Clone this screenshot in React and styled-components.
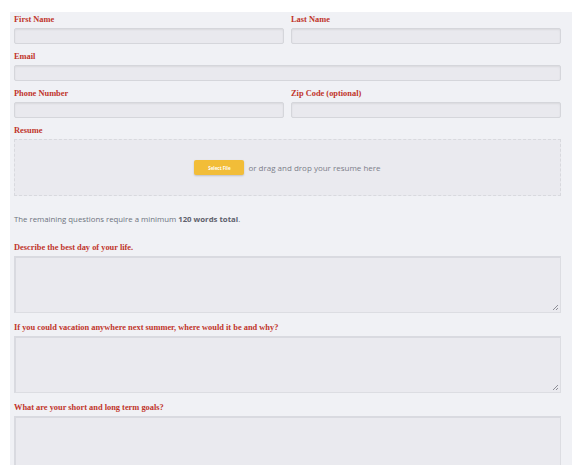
import styled, { createGlobalStyle } from "styled-components";

const GlobalStyle = createGlobalStyle`
  html, body {
    margin: 0;
    padding: 0;
    background: #ffffff;
  }
  * {
    box-sizing: border-box;
  }
`;

const Panel = styled.form`
  margin: 12px 0 0 10px;
  width: 562px;
  height: 453px;
  overflow: hidden;
  background: #f0f1f5;
  padding: 1px 11px 0 4px;
  display: flex;
  flex-direction: column;
`;

const Row = styled.div`
  display: grid;
  grid-template-columns: 1fr 1fr;
  column-gap: 7px;
  margin-bottom: ${(props) => props.$gap || 6}px;
`;

const Field = styled.div`
  display: flex;
  flex-direction: column;
  margin-bottom: ${(props) => props.$gap || 0}px;
`;

const Label = styled.label`
  font-family: "Liberation Serif", "DejaVu Serif", serif;
  font-weight: 700;
  font-size: 8.4px;
  line-height: 12px;
  padding-top: 1px;
  color: #c0352b;
  margin-bottom: 2px;
`;

const Input = styled.input`
  height: 16px;
  width: 100%;
  border: 1px solid #d5d6db;
  border-radius: 2px;
  background: #e9e9ee;
  box-shadow: inset 0 1px 2px rgba(0, 0, 0, 0.07);
  outline: none;
`;

const DropZone = styled.div`
  height: 57px;
  border: 1px dashed #d8d9de;
  background: #eaeaef;
  display: flex;
  align-items: center;
  justify-content: center;
  gap: 4px;
`;

const SelectButton = styled.button`
  width: 50px;
  height: 15px;
  padding: 0;
  border: none;
  border-radius: 2px;
  background: #f2bd38;
  box-shadow: 0 1px 2px rgba(0, 0, 0, 0.18);
  color: #ffffff;
  font-family: "Open Sans", sans-serif;
  font-size: 4.5px;
  font-weight: 700;
`;

const DropText = styled.span`
  font-family: "Open Sans", sans-serif;
  font-size: 8px;
  color: #7c7e8a;
`;

const Info = styled.p`
  margin: 17px 0 16px;
  font-family: "Open Sans", sans-serif;
  font-size: 7.8px;
  line-height: 12px;
  color: #6e717d;

  strong {
    font-weight: 700;
    color: #5f626d;
  }
`;

const TextAreaBox = styled.div`
  position: relative;
  flex-shrink: 0;

  &::after {
    content: "";
    position: absolute;
    right: 3px;
    bottom: 3px;
    width: 5px;
    height: 5px;
    pointer-events: none;
    background: linear-gradient(
      135deg,
      transparent 0 45%,
      #8e8f97 45% 58%,
      transparent 58% 72%,
      #8e8f97 72% 86%,
      transparent 86%
    );
  }
`;

const TextArea = styled.textarea`
  display: block;
  height: 57px;
  width: 100%;
  border: 1px solid #dcdde2;
  border-top: 2px solid #d9dae0;
  border-left: 2px solid #d9dae0;
  border-radius: 0;
  background: #eaeaef;
  resize: none;
  outline: none;
`;

const questions = [
  "Describe the best day of your life.",
  "If you could vacation anywhere next summer, where would it be and why?",
  "What are your short and long term goals?",
];

export default function App() {
  return (
    <>
      <GlobalStyle />
      <Panel>
        <Row>
          <Field>
            <Label>First Name</Label>
            <Input />
          </Field>
          <Field>
            <Label>Last Name</Label>
            <Input />
          </Field>
        </Row>
        <Field $gap={6}>
          <Label>Email</Label>
          <Input />
        </Field>
        <Row $gap={6}>
          <Field>
            <Label>Phone Number</Label>
            <Input />
          </Field>
          <Field>
            <Label>Zip Code (optional)</Label>
            <Input />
          </Field>
        </Row>
        <Field>
          <Label>Resume</Label>
          <DropZone>
            <SelectButton type="button">Select File</SelectButton>
            <DropText>or drag and drop your resume here</DropText>
          </DropZone>
        </Field>
        <Info>
          The remaining questions require a minimum <strong>120 words total</strong>.
        </Info>
        {questions.map((q) => (
          <Field key={q} $gap={8}>
            <Label>{q}</Label>
            <TextAreaBox>
              <TextArea />
            </TextAreaBox>
          </Field>
        ))}
      </Panel>
    </>
  );
}
